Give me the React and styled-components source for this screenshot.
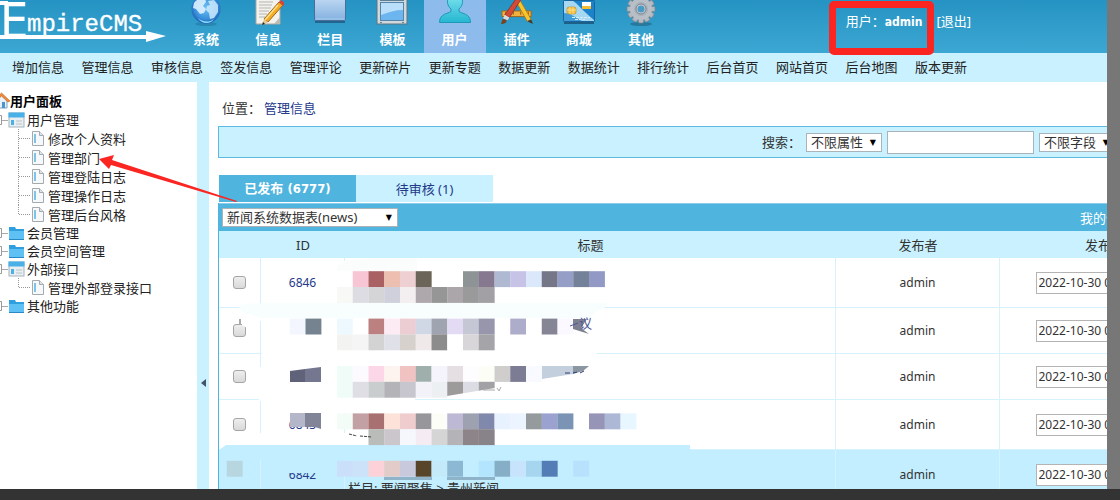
import React from "react";
import styled, { createGlobalStyle } from "styled-components";

const GlobalStyle = createGlobalStyle`
  * {
    box-sizing: border-box;
  }

  body {
    margin: 0;
    color: #333;
    font-family: "Noto Sans", "Noto Sans CJK SC", sans-serif;
    font-size: 13px;
    line-height: 20px;
  }

  a {
    color: inherit;
    text-decoration: none;
  }

  input,
  select {
    font: inherit;
    color: inherit;
  }
`;

/**
 * The outer frame: the page, a grey strip on the right and a dark bar below
 */
const Screen = styled("div")`
  display: grid;
  grid-template-columns: minmax(0, 1fr) 13px;
  grid-template-rows: minmax(0, 1fr) 11px;
  height: 100vh;
  overflow: hidden;
  background: #777;
`;

const Page = styled("div")`
  display: flex;
  flex-direction: column;
  min-height: 0;
  overflow: hidden;
  background: #fff;
`;

const BottomBar = styled("div")`
  grid-column: 1 / -1;
  background: #333;
`;

/**
 * Header with the logo, the main menu and the current user
 */
const Header = styled("header")`
  display: flex;
  flex: none;
  height: 53px;
  color: #fff;
  background: linear-gradient(#2593c3, #3da7d3);
`;

const Logo = styled("svg")`
  flex: none;
  width: 175px;
  height: 53px;
`;

const MainMenu = styled("nav")`
  display: grid;
  grid-template-columns: repeat(8, 1fr);
  flex: none;
  width: 497px;
  height: 53px;
  overflow: hidden;
`;

const MenuItem = styled("a")`
  display: flex;
  flex-direction: column;
  align-items: center;
  justify-content: flex-end;
  height: 53px;
  padding-bottom: 4px;
  font-weight: bold;
  background: ${({ $active }) => ($active ? "#8dbbec" : "transparent")};

  svg {
    flex: none;
    width: 32px;
    height: 32px;
    margin-bottom: 3px;
  }
`;

const Account = styled("div")`
  display: flex;
  align-items: flex-start;
  gap: 14px;
  margin-left: auto;
  padding: 11px 136px 0 0;
`;

const CurrentUser = styled("span")`
  position: relative;

  b {
    font-family: "DejaVu Sans Condensed", "DejaVu Sans", sans-serif;
    font-size: 12px;
  }

  &::after {
    content: "";
    position: absolute;
    z-index: 2;
    inset: -10px -12px -23px -17px;
    border: 7px solid #fb2622;
    border-radius: 5px;
  }
`;

const SubMenu = styled("nav")`
  display: flex;
  flex: none;
  justify-content: space-between;
  height: 29px;
  padding: 4px 140px 0 12px;
  color: #222;
  background: #c9f1ff;
`;

const Body = styled("div")`
  position: relative;
  display: flex;
  flex: 1;
  min-height: 0;
`;

/**
 * The tree on the left
 */
const Sidebar = styled("aside")`
  flex: none;
  width: 197px;
  padding-top: 8px;
  overflow: hidden;
  color: #222;
`;

const Tree = styled("ul")`
  margin: 0 0 0 -7px;
  padding: 0;
  list-style: none;
`;

const TreeTitle = styled("div")`
  display: flex;
  align-items: center;
  height: 21px;
  font-weight: bold;
  color: #000;

  svg {
    width: 17px;
    height: 17px;
    margin-left: -7px;
  }
`;

const Folder = styled("div")`
  display: flex;
  align-items: center;
  height: 18px;

  svg {
    flex: none;
    width: 32px;
    height: 18px;
    margin-right: 2px;
  }
`;

const Branch = styled("ul")`
  margin: 0 0 0 25px;
  padding: 0;
  list-style: none;
`;

const Leaf = styled("li")`
  display: flex;
  align-items: center;
  height: 19px;

  svg {
    flex: none;
    width: 28px;
    height: 19px;
    margin-right: 2px;
  }
`;

const Splitter = styled("button")`
  display: flex;
  flex: none;
  align-items: flex-start;
  justify-content: center;
  width: 12px;
  padding: 297px 0 0;
  border: 0;
  background: #c9f1ff;

  svg {
    width: 6px;
    height: 8px;
  }
`;

const Pointer = styled("svg")`
  position: absolute;
  top: 70px;
  left: 96px;
  width: 144px;
  height: 52px;
  pointer-events: none;
`;

/**
 * The content, which runs on past the right edge of the page
 */
const Main = styled("main")`
  flex: 1;
  min-width: 0;
  padding-left: 9px;
  overflow: hidden;
`;

const Content = styled("div")`
  width: calc(100% + 115px);
`;

const Breadcrumb = styled("div")`
  display: flex;
  gap: 3px;
  height: 44px;
  padding: 16px 0 0 4px;

  a {
    color: #24398c;
  }
`;

const SearchBar = styled("form")`
  display: flex;
  align-items: center;
  justify-content: flex-end;
  gap: 5px;
  height: 32px;
  padding-right: 106px;
  border: 1px solid #5cb9e0;
  background: #c9f1ff;
`;

const SearchInput = styled("input")`
  width: 147px;
  height: 23px;
  border: 1px solid #aab4b8;
  background: #fff;
`;

const SelectBox = styled("span")`
  display: grid;
  align-items: center;
  width: ${({ $width }) => $width}px;
  height: 19px;

  select,
  &::after {
    grid-area: 1 / 1;
  }

  select {
    width: 100%;
    height: 19px;
    padding: 0 4px;
    border: 1px solid #aab4b8;
    line-height: 17px;
    background: #fff;
    appearance: none;
  }

  &::after {
    content: "▼";
    justify-self: end;
    padding-right: 6px;
    font-family: "DejaVu Sans", sans-serif;
    font-size: 8px;
    line-height: 17px;
    color: #000;
    pointer-events: none;
  }
`;

const Tabs = styled("div")`
  display: flex;
  margin-top: 17px;
  padding-left: 1px;
`;

const Tab = styled("button")`
  width: 137px;
  height: 27px;
  padding: 0;
  border: 0;
  font: inherit;
  font-family: ${({ $active }) =>
    $active
      ? '"DejaVu Sans Condensed", "Noto Sans CJK SC", sans-serif'
      : "inherit"};
  font-weight: ${({ $active }) => ($active ? "bold" : "normal")};
  color: ${({ $active }) => ($active ? "#fff" : "#24398c")};
  background: ${({ $active }) => ($active ? "#4fb4de" : "#c9f1ff")};
`;

const Panel = styled("section")`
  position: relative;
  margin-top: 1px;
  border-left: 1px solid #4fb4de;
`;

const PanelBar = styled("div")`
  display: flex;
  align-items: center;
  justify-content: space-between;
  height: 28px;
  padding: 0 90px 0 3px;
  border-top: 1px solid #8accea;
  background: #4fb4de;

  a {
    color: #fff;
  }
`;

const Table = styled("table")`
  width: 100%;
  table-layout: fixed;
  border-spacing: 0;
`;

const HeadCell = styled("th")`
  width: ${({ $width }) => ($width ? `${$width}px` : "auto")};
  height: 27px;
  padding: 0;
  font-weight: normal;
  background: #c9f1ff;
`;

const Row = styled("tr")`
  height: ${({ $tall }) => ($tall ? 50 : 46)}px;
  background: ${({ $selected }) => ($selected ? "#c2eeff" : "#fff")};
`;

const Cell = styled("td")`
  padding: 0;
  border-right: 1px solid #d6f3fd;
  border-bottom: 1px solid #d6f3fd;
  font-size: 12px;
  text-align: center;
`;

const IdLink = styled("a")`
  color: #24398c;
`;

const Category = styled("div")`
  padding: 26px 0 0 3px;
  font-size: 13px;
  text-align: left;
`;

const Check = styled("input").attrs({ type: "checkbox" })`
  display: block;
  width: 13px;
  height: 13px;
  margin: 0 auto;
  border: 1px solid #a5a5a5;
  border-radius: 3px;
  background: linear-gradient(#eee, #d9d9d9);
  appearance: none;
`;

const DateInput = styled("input")`
  display: block;
  width: 150px;
  height: 22px;
  margin: 0 auto;
  padding: 0 2px;
  border: 1px solid #b4b4b4;
  background: #fff;
`;

const Blur = styled("svg")`
  position: absolute;
  top: 0;
  left: -1px;
  width: 500px;
  height: 286px;
  pointer-events: none;
`;

const GlobeIcon = () => (
  <svg viewBox="0 0 32 32">
    <defs>
      <radialGradient id="globe" cx="50%" cy="45%" r="55%">
        <stop offset="0" stopColor="#6cc0f5" />
        <stop offset="0.7" stopColor="#3b92dc" />
        <stop offset="1" stopColor="#1c62b5" />
      </radialGradient>
    </defs>
    <ellipse cx="16" cy="30" rx="11" ry="2" fill="#1f6f9c" opacity="0.5" />
    <circle cx="16" cy="15" r="14.5" fill="url(#globe)" />
    <path d="M4 9c3-4 8-6 11-5l1 4-3 4 3 3-2 4-4 1-4-5-3-1z" fill="#e6f5ff" opacity="0.85" />
    <path d="M18 7l6-1 4 5v7l-4 6-4 1-1-6-3-3 1-4 3-1z" fill="#d4edff" opacity="0.8" />
    <path d="M8 24c4 4 11 5 16 1-3 5-12 6-16-1z" fill="#8fe0ff" />
  </svg>
);

const NoteIcon = () => (
  <svg viewBox="0 0 32 32">
    <path d="M4 0h24v30H4z" fill="#f4f2ec" stroke="#a9a79f" />
    <path d="M7 8h14M7 11h13M7 14h12M7 17h10M7 20h8M7 23h6" stroke="#b4b4b2" />
    <path d="M22 30l6-7v7z" fill="#bdbab0" />
    <path d="M27 8l4 3-15 17-4-3z" fill="#f6ad25" stroke="#9c651a" />
    <path d="M26 11l-13 15" stroke="#ffe28a" strokeWidth="1.4" />
    <path d="M27 8l2-2 4 3-2 3z" fill="#d7433a" />
    <path d="M12 25l4 3-6 3z" fill="#eac48a" />
    <path d="M10 31l1-3 2 2z" fill="#222" />
  </svg>
);

const WindowIcon = () => (
  <svg viewBox="0 0 32 32">
    <defs>
      <linearGradient id="pane" x1="0" y1="0" x2="0" y2="1">
        <stop offset="0" stopColor="#c5dcf3" />
        <stop offset="1" stopColor="#83b1e0" />
      </linearGradient>
    </defs>
    <path d="M1 28h30" stroke="#23658f" strokeWidth="2" />
    <rect x="0.5" y="1.5" width="31" height="25" rx="1" fill="url(#pane)" stroke="#476f9b" />
    <path d="M2 25h28" stroke="#a9cef0" />
  </svg>
);

const TemplateIcon = () => (
  <svg viewBox="0 0 32 32">
    <rect x="1" y="1" width="30" height="29" fill="#d1d8dc" stroke="#5f7482" />
    <path d="M4 3h24v4H4z" fill="#5c7f9c" />
    <rect x="4.500" y="8.500" width="23" height="18" fill="#6db5ee" stroke="#5685ab" />
    <path d="M5 9h22v7c-8 0-14 2-22 5z" fill="#b9dffa" />
    <path d="M4 28.500h2M26 28.500h2" stroke="#66808f" />
  </svg>
);

const UserIcon = () => (
  <svg viewBox="0 0 32 32">
    <defs>
      <linearGradient id="user" x1="0" y1="0" x2="0" y2="1">
        <stop offset="0" stopColor="#7fe4f0" />
        <stop offset="1" stopColor="#25b6d1" />
      </linearGradient>
    </defs>
    <path
      d="M16 0c5 0 8 4 7.500 8.500-.3 3-1.800 5-3.500 6.500v2.500c2 1.500 6 2 8.500 4 2 1.600 3 4 3 7H.500c0-3 1-5.400 3-7 2.500-2 6.500-2.500 8.500-4V15c-1.700-1.500-3.200-3.500-3.500-6.500C8 4 11 0 16 0z"
      fill="url(#user)"
      stroke="#1d98b6"
    />
  </svg>
);

const PluginIcon = () => (
  <svg viewBox="0 0 34 32">
    <path d="M1 17h31v6H1z" fill="#efb040" stroke="#9a6518" />
    <path d="M5 18v3M9 18v2M13 18v3M21 18v3M25 18v2M29 18v3" stroke="#865611" />
    <path d="M13 2l4-2 15 26-4 2z" fill="#f6c52c" stroke="#a8741a" strokeWidth="0.8" />
    <path d="M32 26l2 5-6-3z" fill="#4c3620" />
    <path d="M19 0l4 2L9 24l-5-3z" fill="#d34a37" stroke="#8b2a20" strokeWidth="0.8" />
    <path d="M4 21l5 3-2 3-5-2z" fill="#d8dadb" />
    <path d="M2 25l4 2c0 3-3 4-6 4z" fill="#774321" />
  </svg>
);

const CardIcon = () => (
  <svg viewBox="0 0 32 32">
    <path d="M1 29h30" stroke="#1e5f88" strokeWidth="2" />
    <rect x="0.5" y="6.500" width="31" height="21" rx="1" fill="#1c83cb" stroke="#17649f" />
    <path d="M1 7h9c5 3 9 9 21 19v1H1z" fill="#a7d8f3" />
    <path d="M1 19c6 0 11 4 18 8H1z" fill="#3d9cd9" />
    <rect x="4" y="13" width="9" height="7" rx="2" fill="#f3bf3f" stroke="#ba8418" strokeWidth="0.6" />
    <path d="M7 13v7M10 13v7M4 16h9" stroke="#ffe499" strokeWidth="0.8" />
    <path d="M19 8h9v4h-9z" fill="#fff" />
    <path d="M19 12h9v3h-9z" fill="#f4bd33" />
    <path d="M9 23.500h18M12 25.500h10" stroke="#d3eefb" strokeDasharray="3 1" />
  </svg>
);

const GearIcon = () => (
  <svg viewBox="0 0 32 32">
    <ellipse cx="16" cy="30" rx="11" ry="2" fill="#22607f" opacity="0.6" />
    <g fill="#b4bac2" stroke="#7b848e" strokeWidth="0.7">
      {[0, 30, 60, 90, 120, 150].map((angle) => (
        <rect
          key={angle}
          x="13.500"
          y="1"
          width="5"
          height="28"
          rx="1"
          transform={`rotate(${angle} 16 15)`}
        />
      ))}
    </g>
    <circle cx="16" cy="15" r="11" fill="#b9bfc7" />
    <circle cx="16" cy="15" r="7" fill="#a9b0b9" />
    <circle cx="16" cy="15" r="5" fill="#c9ced4" stroke="#7e8791" />
    <circle cx="16" cy="15" r="3.500" fill="#4b9cc4" />
  </svg>
);

const HouseIcon = () => (
  <svg viewBox="0 0 17 17">
    <path d="M3 8v8h11V8L8.500 3z" fill="#e9f2fa" stroke="#7fa3c4" />
    <path d="M9 10h3v6H9z" fill="#4c93d2" />
    <path d="M0 9l8.500-8L17 9l-2 1-6.500-6L2 10z" fill="#ef8b3a" stroke="#c35d1c" strokeWidth="0.6" />
  </svg>
);

const FolderIcon = ({ open }) => (
  <svg viewBox="0 0 32 18">
    <path d="M.5 4.500h8v9h-8zM3 9h4" fill="#fff" stroke="#999" />
    <path d="M9 9.500h6" stroke="#aaa" />
    {open ? (
      <>
        <rect x="16" y="2" width="15" height="14" fill="#e9eef1" stroke="#a3b4be" />
        <path d="M15.500 1.500h16v5h-16z" fill="#49b1e8" />
        <path d="M18 9h3v5h-3z" fill="#49b1e8" />
        <path d="M23 10h6M23 13h6" stroke="#b8c4ca" />
      </>
    ) : (
      <>
        <path d="M16 3h6l1 2h8v11H16z" fill="#2f9fdf" />
        <path d="M16 7h15v9H16z" fill="#5fc0f3" />
        <path d="M16 15.500h15" stroke="#2889c4" />
      </>
    )}
  </svg>
);

const LeafIcon = ({ last }) => (
  <svg viewBox="0 0 28 19">
    <path d={last ? "M.5 0v9.500H12" : "M.5 0v19M1 9.500h11"} fill="none" stroke="#999" strokeDasharray="1 1" />
    <path d="M14.500 2.500h7l4 4v10h-11z" fill="#f6f8f9" stroke="#a3abb0" />
    <path d="M21.500 2.500v4h4" fill="#dfe4e7" stroke="#a3abb0" />
    <path d="M17 5v9" stroke="#7dc3ea" strokeWidth="2" />
  </svg>
);

const mainMenu = [
  { label: "系统", Icon: GlobeIcon },
  { label: "信息", Icon: NoteIcon },
  { label: "栏目", Icon: WindowIcon },
  { label: "模板", Icon: TemplateIcon },
  { label: "用户", Icon: UserIcon, active: true },
  { label: "插件", Icon: PluginIcon },
  { label: "商城", Icon: CardIcon },
  { label: "其他", Icon: GearIcon },
];

const subMenu = [
  "增加信息",
  "管理信息",
  "审核信息",
  "签发信息",
  "管理评论",
  "更新碎片",
  "更新专题",
  "数据更新",
  "数据统计",
  "排行统计",
  "后台首页",
  "网站首页",
  "后台地图",
  "版本更新",
];

const tree = [
  {
    label: "用户管理",
    items: ["修改个人资料", "管理部门", "管理登陆日志", "管理操作日志", "管理后台风格"],
  },
  { label: "会员管理" },
  { label: "会员空间管理" },
  { label: "外部接口", items: ["管理外部登录接口"] },
  { label: "其他功能" },
];

const rows = [
  { key: 1, id: "6846", tall: true },
  { key: 2 },
  { key: 3 },
  { key: 4, id: "6843", tall: true },
  { key: 5, id: "6842", tall: true, selected: true, category: "栏目: 要闻聚焦 > 贵州新闻" },
];

// Blurred squares: [line, first column, colours]
const squares = [
  [0, 1, ["#f7c5d3", "#a96163", "#ecbfb0", "#efd0d2", "#6a6558"]],
  [0, 8, ["#8e9495", "#85788f", "#b0b9d2", "#c6c3e6", "#dbe8fc", "#757688", "#959ec7", "#748299", "#9299c4"]],
  [1, 0, ["#f8f8f6", "#dddce2", "#d5d4d6", "#d0d0dc", "#f3eff0", "#aea8ac", "#969696", "#aaa6aa", "#9b9a9b", "#a2a0a4"]],
  [3, -3, ["#f3f6fe", "#75828f"]],
  [3, 0, ["#eef9ff", "#fff", "#bc8080", "#fdebf3", "#eccdd3", "#d0d8e6", "#a0a3b0", "#e3dbf4", "#c6c7d5", "#9796ad"]],
  [3, 11, ["#adacca", "#fff", "#858596", "#fbf8ff"]],
  [4, 0, ["#f3f3f2", "#f6f5f6", "#d3d3d4", "#e0e1e8", "#d7d1ce", "#f0e9ea", "#8c8c8c", "#fff", "#d8d6d8", "#a5a4a8"]],
  [6, 0, ["#f0fcf7", "#fcfaff", "#fcd7e8", "#fdf4ef", "#f0c2c2", "#9fb0ac", "#f5f3fc", "#e5dfe4", "#fdfcff", "#fcfdf4", "#cfcecc", "#7c7d94", "#f8faff"]],
  [7, 0, ["#f0fcf7", "#dfdee5", "#c9cdce", "#b4b4b8", "#c7c5ce", "#f2f2f8", "#edf0f2", "#9d9b99", "#dcdde4", "#a2a1a6"]],
  [9, 0, ["#f4fcf8", "#c3a0a4", "#a87070", "#fce2d8", "#efcdcf", "#96969b", "#fdfdf8", "#bdb8d3", "#9ea1b0", "#8088ab", "#e8f2fe", "#ecf4ff", "#959a9d", "#9ba2cf", "#7b93b5"]],
  [9, 16, ["#9694b7", "#adb7d6", "#e8f6ff"]],
  [10, 2, ["#b9bcb8", "#cac6cc", "#f6f6fd", "#f5ecf3", "#d5d5d5", "#b4b3b7", "#8c8488", "#878388"]],
  [12, -7, ["#b7d6e0"]],
  [12, 0, ["#cadffa", "#cce2f9", "#fcd1d8", "#e2cbc8", "#c8c9dd", "#574429", "#c4eafa", "#8db8d4", "#c2eeff", "#b4e5fe", "#86aec7", "#c8e4fc", "#a6d5ef", "#547db5"]],
  [12, 15, ["#b8e1fd"]],
];

/**
 * The censored part of the list. It hides the titles and most of the IDs.
 */
const BlurredTitles = () => (
  <Blur viewBox="218 203 500 286">
    <path d="M262 291h74v-25q8-7 20-7h255v44h-3l-11 12v38l-14 18-28 14h-55v8H415v8H259v-34h85v-12H262v-34h-24v-10h24z" fill="#fff" />
    <path d="M238 305q10-2 30-2h342q-6 6-14 9l-6 6H262l-20-6z" fill="#f8fefe" />
    <path d="M337 266q10-7 30-7h50v12h-80z" fill="#fbfdfc" />
    <path d="M262 400h90v13h-90zM254 433h98v12h-98zM344 400h60v13h-60zM346 429h22v16h-22z" fill="#fff" />
    <path d="M219 450l7-5h464v5l-60 5v27H346v-9h-84v-13h-12v25h-24v-25h-7z" fill="#c2eeff" />
    {squares.map(([line, start, colours]) =>
      colours.map((colour, i) => (
        <rect
          key={`${line}-${start + i}`}
          x={337 + (start + i) * 15.75}
          y={271.2 + line * 15.8}
          width="15.9"
          height="15.9"
          fill={colour}
        />
      ))
    )}
    <path d="M240 319v6" fill="none" stroke="#aaa" strokeWidth="2" />
    <path d="M242 320h5v8l-5-3z" fill="#fff" />
    <path d="M290 371l15-2v13h-15z" fill="#60627a" />
    <path d="M305 369l16-2v15h-16z" fill="#74778f" />
    <path d="M290 413h15v14h-15z" fill="#b4b6c9" />
    <path d="M305 413h16v16l-6-2h-10z" fill="#808496" />
    <path d="M573 319h14l-6 9 8 6-16-5z" fill="#7d8090" />
    <text x="579" y="328" fontSize="13" fill="#4d5898">议</text>
    <path d="M570 326l8-3" stroke="#4d5898" />
    <path d="M542 366h31v8l-31 5z" fill="#c3cfdc" />
    <path d="M573 366h16l-6 5-10 3z" fill="#8a97a3" />
    <path d="M565 373h5M573 373l4-1M580 373l4-2" stroke="#2f3c75" />
    <path d="M447 396l48-8v10h-48z" fill="#fff" />
    <path d="M483 390h12M497 388l2 3 2-4" fill="none" stroke="#aaa" />
    <path d="M349 434l8 2M360 436l12 1" stroke="#444" strokeDasharray="3 1" />
    <path d="M384 477h48v3h-48zM447 477h48v3h-48z" fill="#8fb3c8" />
  </Blur>
);

const Select = ({ width, label, children }) => (
  <SelectBox $width={width}>
    <select aria-label={label}>
      <option>{children}</option>
    </select>
  </SelectBox>
);

const SideMenu = () => (
  <Sidebar>
    <TreeTitle>
      <HouseIcon />
      用户面板
    </TreeTitle>
    <Tree>
      {tree.map(({ label, items }) => (
        <li key={label}>
          <Folder>
            <FolderIcon open={Boolean(items)} />
            <a href="#tree">{label}</a>
          </Folder>
          {items && (
            <Branch>
              {items.map((item, i) => (
                <Leaf key={item}>
                  <LeafIcon last={i === items.length - 1} />
                  <a href="#tree">{item}</a>
                </Leaf>
              ))}
            </Branch>
          )}
        </li>
      ))}
    </Tree>
  </Sidebar>
);

/**
 * The list of published items, with its toolbar
 */
const NewsList = () => (
  <Panel>
    <PanelBar>
      <Select width={176} label="数据表">新闻系统数据表(news)</Select>
      <a href="#mine">我的信息</a>
    </PanelBar>
    <Table>
      <thead>
        <tr>
          <HeadCell $width={42} />
          <HeadCell $width={84}>ID</HeadCell>
          <HeadCell>标题</HeadCell>
          <HeadCell $width={164}>发布者</HeadCell>
          <HeadCell $width={222}>发布时间</HeadCell>
        </tr>
      </thead>
      <tbody>
        {rows.map(({ key, id, tall, selected, category }) => (
          <Row key={key} $tall={tall} $selected={selected}>
            <Cell>
              <Check aria-label="选择" />
            </Cell>
            <Cell>{id && <IdLink href="#item">{id}</IdLink>}</Cell>
            <Cell>{category && <Category>{category}</Category>}</Cell>
            <Cell>admin</Cell>
            <Cell>
              <DateInput aria-label="发布时间" defaultValue="2022-10-30 0" />
            </Cell>
          </Row>
        ))}
      </tbody>
    </Table>
    <BlurredTitles />
  </Panel>
);

export default function App() {
  return (
    <>
      <GlobalStyle />
      <Screen>
        <Page>
          <Header>
            <Logo viewBox="0 0 175 53" fill="#fff">
              <text x="0" y="38" fontFamily="DejaVu Sans Condensed, DejaVu Sans, sans-serif" fontSize="50">E</text>
              <path d="M0 1h8v4H0zM0 35h146v-4l20 5-20 6v-3H0z" />
              <text x="27" y="31" fontFamily="Liberation Mono, monospace" fontSize="24" stroke="#fff" strokeWidth="0.3">mpireCMS</text>
            </Logo>
            <MainMenu>
              {mainMenu.map(({ label, Icon, active }) => (
                <MenuItem key={label} href="#menu" $active={active}>
                  <Icon />
                  {label}
                </MenuItem>
              ))}
            </MainMenu>
            <Account>
              <CurrentUser>
                用户：<b>admin</b>
              </CurrentUser>
              <a href="#logout">[退出]</a>
            </Account>
          </Header>
          <SubMenu>
            {subMenu.map((label) => (
              <a key={label} href="#sub">{label}</a>
            ))}
          </SubMenu>
          <Body>
            <SideMenu />
            <Splitter type="button" aria-label="收起">
              <svg viewBox="0 0 6 8">
                <path d="M6 0v8L1 4z" fill="#456" />
              </svg>
            </Splitter>
            <Main>
              <Content>
                <Breadcrumb>
                  位置：<a href="#list">管理信息</a>
                </Breadcrumb>
                <SearchBar>
                  <label htmlFor="keyword">搜索：</label>
                  <Select width={76} label="属性">不限属性</Select>
                  <SearchInput id="keyword" />
                  <Select width={76} label="字段">不限字段</Select>
                </SearchBar>
                <Tabs>
                  <Tab type="button" $active>已发布 (6777)</Tab>
                  <Tab type="button">待审核 (1)</Tab>
                </Tabs>
                <NewsList />
              </Content>
            </Main>
            <Pointer viewBox="96 152 144 52">
              <path d="M99 159l15-4-2 5 125 41-1 1-125-37-2 4z" fill="#fb2622" />
            </Pointer>
          </Body>
        </Page>
        <div />
        <BottomBar />
      </Screen>
    </>
  );
}
